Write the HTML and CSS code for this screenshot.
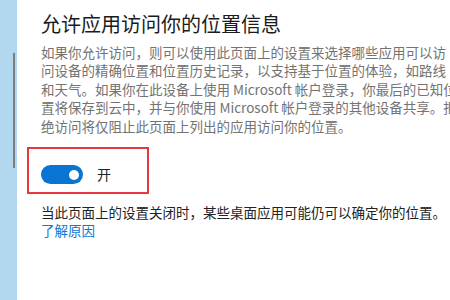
FILE: index.html
```html
<!DOCTYPE html>
<html lang="zh-CN">
<head>
<meta charset="utf-8">
<link rel="stylesheet" href="styles.css">
</head>
<body>
<div class="page">
  <aside class="side"><div class="thumb"></div></aside>
  <main class="main">
    <h1 class="title">允许应用访问你的位置信息</h1>
    <p class="desc">如果你允许访问，则可以使用此页面上的设置来选择哪些应用可以访<br>问设备的精确位置和位置历史记录，以支持基于位置的体验，如路线<br>和天气。如果你在此设备上使用 Microsoft 帐户登录，你最后的已知位<br>置将保存到云中，并与你使用 Microsoft 帐户登录的其他设备共享。拒<br>绝访问将仅阻止此页面上列出的应用访问你的位置。</p>
    <div class="highlight">
      <span class="toggle"><span class="knob"></span></span>
      <span class="state">开</span>
    </div>
    <p class="note">当此页面上的设置关闭时，某些桌面应用可能仍可以确定你的位置。<br><a class="link">了解原因</a></p>
  </main>
</div>
</body>
</html>
```
FILE: styles.css
```css
html, body {
  margin: 0;
  padding: 0;
  background: #fff;
  width: 450px;
  height: 300px;
  overflow: hidden;
  font-family: "Noto Sans CJK SC", "Noto Sans", sans-serif;
}
.page {
  display: flex;
  height: 300px;
}
.side {
  width: 17px;
  flex: none;
  background: #b1d8ee;
  padding-top: 53px;
  box-sizing: border-box;
}
.thumb {
  width: 2px;
  height: 115px;
  margin-left: 13px;
  background: #7c7f82;
}
.main {
  padding: 10px 0 0 24px;
  display: flex;
  flex-direction: column;
  align-items: flex-start;
  white-space: nowrap;
}
.title {
  margin: 0;
  font-size: 20px;
  line-height: 28px;
  font-weight: 400;
  color: #1b1b1b;
}
.desc {
  margin: 5px 0 0;
  font-size: 13.5px;
  line-height: 18.4px;
  color: #737373;
}
.highlight {
  display: flex;
  align-items: center;
  margin: 12px 0 0 -14px;
  width: 122px;
  height: 47px;
  box-sizing: border-box;
  border: 2px solid #e8383d;
  padding: 16px 0 8px 12px;
}
.toggle {
  width: 42px;
  height: 19px;
  border-radius: 10px;
  background: #0a74d2;
  display: flex;
  align-items: center;
  justify-content: flex-end;
  padding-right: 4px;
  box-sizing: border-box;
}
.knob {
  width: 10px;
  height: 10px;
  border-radius: 50%;
  background: #fff;
}
.state {
  margin-left: 14px;
  font-size: 14px;
  line-height: 19px;
  color: #222;
}
.note {
  margin: 9px 0 0;
  font-size: 13.5px;
  line-height: 18px;
  color: #222;
}
.link {
  color: #1176d4;
}
```
